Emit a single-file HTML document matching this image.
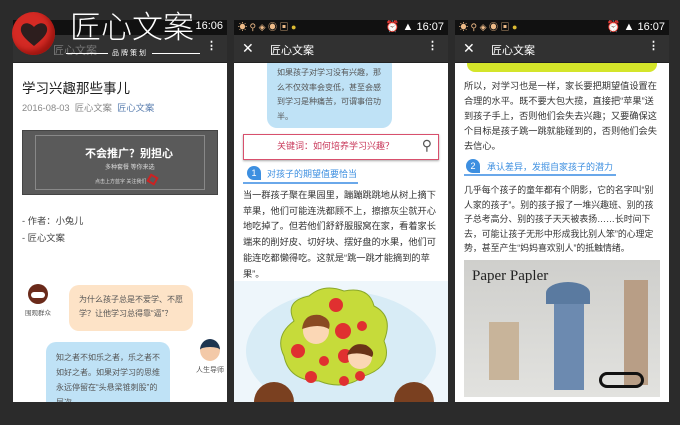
<!DOCTYPE html>
<html><head><meta charset="utf-8"><style>
*{margin:0;padding:0;box-sizing:border-box}
body{width:680px;height:425px;background:#2b2b2b;position:relative;overflow:hidden;font-family:"Liberation Sans","Noto Sans CJK SC",sans-serif;color:#333}
.a{position:absolute}
.sb{background:#111;height:15px;top:20px;color:#fff;font-size:11px}
.hd{background:#313131;height:28px;top:35px;color:#fff;font-size:11px;border-bottom:1px solid #222}
.w{background:#fff;top:63px;height:339px;overflow:hidden}
.p{font-size:9.2px;line-height:15.5px;color:#333}
.bub{border-radius:10px;font-size:8px;line-height:14px;color:#555;padding:8px 10px}
</style></head><body>
<!-- phone 1 -->
<div class="a sb" style="left:13px;width:214px;"><span class="a" style="right:4px;top:0">16:06</span></div>
<div class="a hd" style="left:13px;width:214px;"><span class="a" style="left:40px;top:7px;color:#777">匠心文案</span><span class="a" style="right:10px;top:4px;font-weight:bold">⋮</span></div>
<div class="a w" style="left:13px;width:214px;">
 <div class="a" style="left:9px;top:14px;font-size:13.5px;color:#222">学习兴趣那些事儿</div>
 <div class="a" style="left:9px;top:37px;font-size:9.3px;color:#888">2016-08-03&nbsp; 匠心文案&nbsp; <span style="color:#5b7fb0">匠心文案</span></div>
 <div class="a" style="left:9px;top:67px;width:196px;height:65px;background:#5a5a5a;border:1px solid #444">
  <div class="a" style="left:12px;top:4px;width:170px;height:55px;border:1px solid #888"></div>
  <div class="a" style="left:62px;top:14px;color:#fff;font-size:11px;font-weight:bold">不会推广？别担心</div>
  <div class="a" style="left:82px;top:31px;color:#ddd;font-size:6px">多种套餐 等你来选</div>
  <div class="a" style="left:72px;top:47px;color:#ddd;font-size:5px">点击上方蓝字 关注我们</div>
  <div class="a" style="left:125px;top:44px;width:9px;height:9px;border:2px solid #c22;transform:rotate(30deg)"></div>
 </div>
 <div class="a" style="left:9px;top:150px;line-height:17px;color:#444;font-size:9.3px">- 作者：小兔儿<br>- 匠心文案</div>
 <div class="a" style="left:15px;top:221px;width:20px;height:20px;border-radius:50%;background:#6a2a1a"><div class="a" style="left:3px;top:8px;width:14px;height:6px;background:#fff;border-radius:3px"></div></div>
 <div class="a" style="left:12px;top:244px;font-size:6.5px;color:#555">围观群众</div>
 <div class="a bub" style="left:56px;top:222px;width:124px;height:46px;background:#fde3c7">为什么孩子总是不爱学、不愿学？让他学习总得靠“逼”？</div>
 <div class="a" style="left:187px;top:276px;width:20px;height:22px;border-radius:50%;background:#f3c9a8;border-top:8px solid #1d3550"></div>
 <div class="a" style="left:183px;top:302px;font-size:7px;color:#555">人生导师</div>
 <div class="a bub" style="left:33px;top:279px;width:124px;height:80px;background:#bfe2f6;line-height:15px">知之者不如乐之者，乐之者不如好之者。如果对学习的思维永远停留在“头悬梁锥刺股”的层次，</div>
</div>
<!-- logo -->
<div class="a" style="left:12px;top:12px;width:43px;height:43px;border-radius:50%;background:#d42a24;box-shadow:inset -4px -4px 6px #9c1510"></div>
<svg class="a" style="left:18px;top:20px" width="32" height="28" viewBox="0 0 32 28"><path d="M16 26 C6 18 2 13 3 8 C4 3 10 1 16 7 C22 1 28 3 29 8 C30 13 26 18 16 26Z" fill="#2d1e1e"/></svg>
<div class="a" style="left:70px;top:11px;font-size:31px;color:#fff;font-weight:300;line-height:34px">匠心文案</div>
<div class="a" style="left:66px;top:53px;width:42px;height:1px;background:#fff"></div>
<div class="a" style="left:112px;top:48px;font-size:7px;color:#fff;letter-spacing:2px">品牌策划</div>
<div class="a" style="left:152px;top:53px;width:48px;height:1px;background:#fff"></div>
<!-- phone 2 -->
<div class="a sb" style="left:234px;width:214px;"><span class="a" style="left:4px;top:0;font-size:9px;color:#eb8">☀ ⚲ ◈ ◉ ▣ <span style="color:#db3">●</span></span><span class="a" style="right:4px;top:0">⏰ ▲ 16:07</span></div>
<div class="a hd" style="left:234px;width:214px;"><span class="a" style="left:8px;top:5px;font-size:14px">✕</span><span class="a" style="left:36px;top:7px">匠心文案</span><span class="a" style="right:10px;top:4px;font-weight:bold">⋮</span></div>
<div class="a w" style="left:234px;width:214px;">
 <div class="a bub" style="left:33px;top:-8px;width:125px;height:73px;background:#bfe2f6;padding-top:11px;line-height:14.5px">如果孩子对学习没有兴趣，那么不仅效率会变低，甚至会感到学习是种痛苦，可谓事倍功半。</div>
 <div class="a" style="left:9px;top:71px;width:196px;height:26px;border:1.5px solid #d8506d;box-shadow:0 1px 2px #aaa;color:#c8385a;font-size:9px;line-height:23px;padding-left:33px">关键词：如何培养学习兴趣？<span class="a" style="right:6px;top:-1px;color:#555;font-size:14px">⚲</span></div>
 <div class="a" style="left:13px;top:103px;width:14px;height:14px;border-radius:7px 7px 0 7px;background:#3d8fe0;color:#fff;font-size:9px;text-align:center;line-height:14px">1</div>
 <div class="a" style="left:33px;top:104px;font-size:9px;color:#3d8fe0">对孩子的期望值要恰当</div>
 <div class="a" style="left:9px;top:119px;width:115px;height:2px;background:#6aa8ea"></div>
 <div class="a p" style="left:9px;top:125px;width:200px;line-height:15.7px">当一群孩子聚在果园里，蹦蹦跳跳地从树上摘下苹果，他们可能连洗都顾不上，擦擦灰尘就开心地吃掉了。但若他们舒舒服服窝在家，看着家长端来的削好皮、切好块、摆好盘的水果，他们可能连吃都懒得吃。这就是“跳一跳才能摘到的苹果”。</div>
 <svg class="a" style="left:0;top:218px" width="214" height="121" viewBox="0 0 214 121">
  <rect width="214" height="121" fill="#eef6fb"/>
  <ellipse cx="107" cy="70" rx="95" ry="60" fill="#d8ecf6"/>
  <path d="M60 40 Q50 20 75 15 Q90 2 110 10 Q135 5 140 25 Q160 35 150 60 Q160 85 130 95 Q110 110 85 100 Q55 100 50 75 Q40 55 60 40Z" fill="#c6db3a" stroke="#8aa82a"/>
  <g fill="#e03030"><circle cx="102" cy="24" r="7"/><circle cx="109" cy="50" r="8"/><circle cx="128" cy="45" r="5"/><circle cx="64" cy="70" r="7"/><circle cx="90" cy="80" r="5"/><circle cx="111" cy="75" r="7"/><circle cx="77" cy="96" r="6"/><circle cx="110" cy="100" r="5"/><circle cx="126" cy="95" r="5"/></g>
  <circle cx="82" cy="50" r="13" fill="#fbd7b5"/><path d="M68 48 Q70 32 86 34 Q98 38 95 48 Q85 42 68 48Z" fill="#8a4a22"/>
  <circle cx="126" cy="76" r="12" fill="#fbd7b5"/><path d="M113 74 Q118 60 132 64 Q142 70 138 76 Q125 70 113 74Z" fill="#6a3418"/>
  <circle cx="40" cy="121" r="20" fill="#7a4020"/><circle cx="180" cy="121" r="20" fill="#7a4020"/>
 </svg>
</div>
<!-- phone 3 -->
<div class="a sb" style="left:455px;width:214px;"><span class="a" style="left:4px;top:0;font-size:9px;color:#eb8">☀ ⚲ ◈ ◉ ▣ <span style="color:#db3">●</span></span><span class="a" style="right:4px;top:0">⏰ ▲ 16:07</span></div>
<div class="a hd" style="left:455px;width:214px;"><span class="a" style="left:8px;top:5px;font-size:14px">✕</span><span class="a" style="left:36px;top:7px">匠心文案</span><span class="a" style="right:10px;top:4px;font-weight:bold">⋮</span></div>
<div class="a w" style="left:455px;width:214px;">
 <div class="a" style="left:12px;top:-3px;width:190px;height:12px;background:#d4e52a;border-radius:0 0 8px 8px"></div>
 <div class="a p" style="left:9px;top:16px;width:194px;line-height:15px;font-size:9.2px">所以，对学习也是一样，家长要把期望值设置在合理的水平。既不要大包大揽，直接把“苹果”送到孩子手上，否则他们会失去兴趣；又要确保这个目标是孩子跳一跳就能碰到的，否则他们会失去信心。</div>
 <div class="a" style="left:11px;top:96px;width:14px;height:14px;border-radius:7px 7px 0 7px;background:#3d8fe0;color:#fff;font-size:9px;text-align:center;line-height:14px">2</div>
 <div class="a" style="left:32px;top:97px;font-size:9px;color:#3d8fe0">承认差异，发掘自家孩子的潜力</div>
 <div class="a" style="left:9px;top:111px;width:152px;height:2px;background:#6aa8ea"></div>
 <div class="a p" style="left:9px;top:120px;width:194px;line-height:14.5px;font-size:8.9px">几乎每个孩子的童年都有个阴影，它的名字叫“别人家的孩子”。别的孩子报了一堆兴趣班、别的孩子总考高分、别的孩子天天被表扬……长时间下去，可能让孩子无形中形成我比别人笨”的心理定势，甚至产生“妈妈喜欢别人”的抵触情绪。</div>
 <div class="a" style="left:9px;top:197px;width:196px;height:137px;background:linear-gradient(#cfcfcc,#e2e2df)">
  <div class="a" style="left:8px;top:8px;font-size:15px;color:#222;font-family:'Liberation Serif',serif">Paper Papler</div>
  <div class="a" style="left:90px;top:40px;width:30px;height:90px;background:#6c8ab0"></div>
  <div class="a" style="left:82px;top:22px;width:44px;height:22px;background:#5a7aa0;border-radius:50% 50% 0 0"></div>
  <div class="a" style="left:25px;top:62px;width:30px;height:58px;background:#c8b49a"></div>
  <div class="a" style="left:160px;top:20px;width:24px;height:105px;background:#b89e86"></div>
  <div class="a" style="left:135px;top:112px;width:45px;height:16px;border:3px solid #111;border-radius:8px"></div>
 </div>
</div>
</body></html>
